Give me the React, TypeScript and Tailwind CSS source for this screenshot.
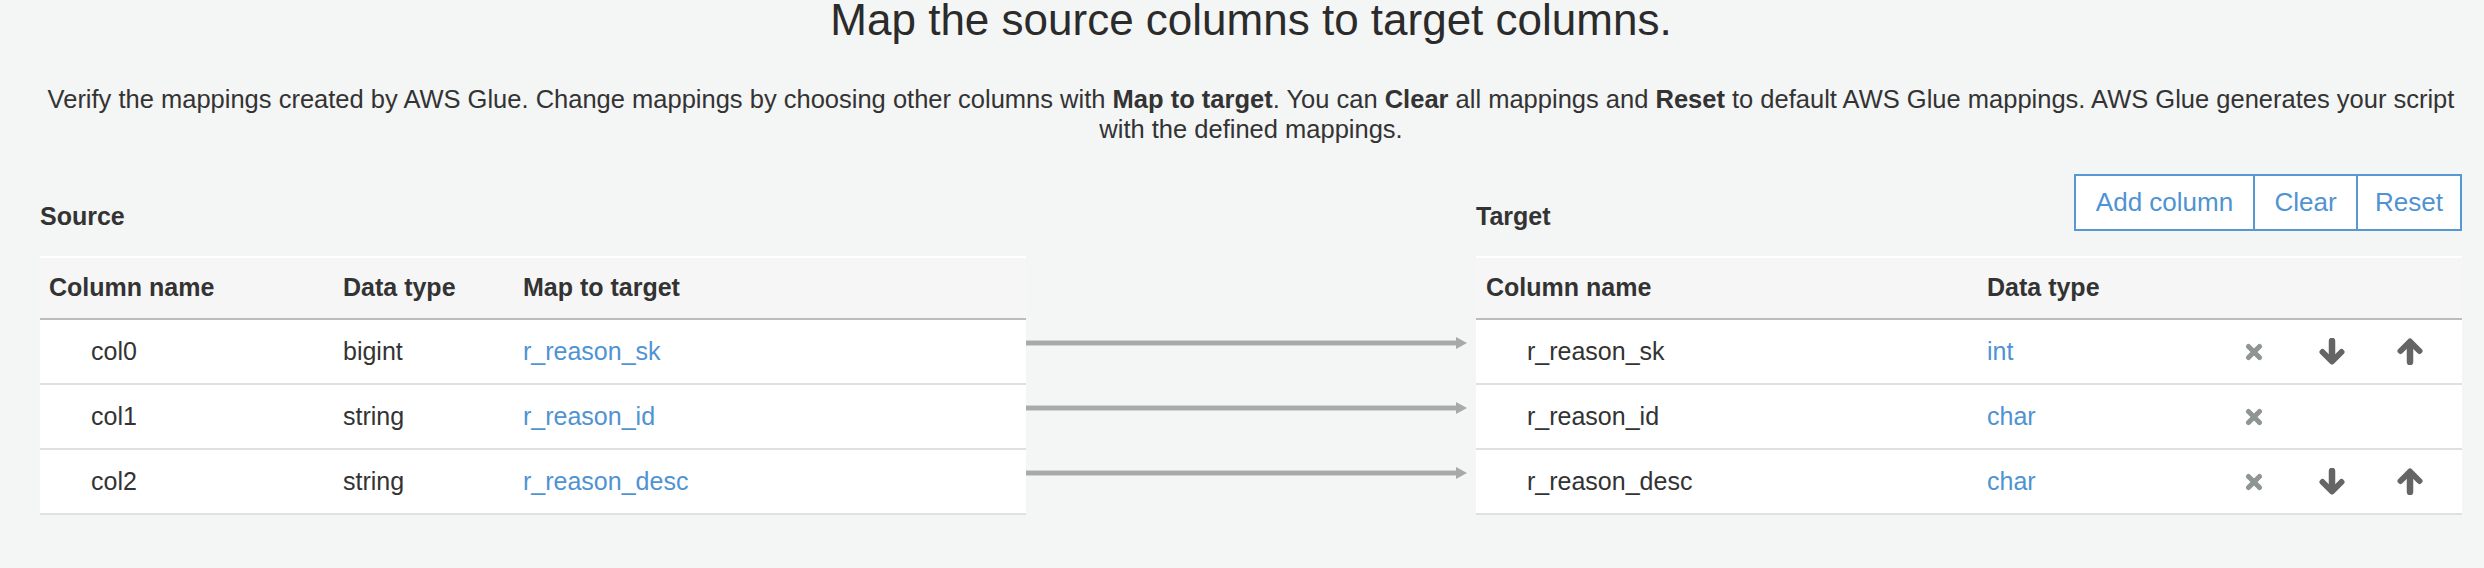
import React from "react";

const FONT = { fontFamily: '"Liberation Sans", Arial, Helvetica, sans-serif' };

function XIcon() {
  return (
    <svg width="18" height="18" viewBox="0 0 18 18">
      <path d="M3.5 3.5 L14.5 14.5 M14.5 3.5 L3.5 14.5" stroke="#8f9494" strokeWidth="5" strokeLinecap="round" fill="none" />
    </svg>
  );
}

function DownIcon() {
  return (
    <svg width="28" height="27" viewBox="0 0 28 27">
      <path d="M14 3 L14 22" stroke="#656565" strokeWidth="6.5" strokeLinecap="round" fill="none" />
      <path d="M4.5 14 L14 23.5 L23.5 14" stroke="#656565" strokeWidth="6" strokeLinecap="round" strokeLinejoin="round" fill="none" />
    </svg>
  );
}

function UpIcon() {
  return (
    <svg width="28" height="27" viewBox="0 0 28 27">
      <path d="M14 24 L14 5" stroke="#656565" strokeWidth="6.5" strokeLinecap="round" fill="none" />
      <path d="M4.5 13 L14 3.5 L23.5 13" stroke="#656565" strokeWidth="6" strokeLinecap="round" strokeLinejoin="round" fill="none" />
    </svg>
  );
}

function Arrow() {
  return (
    <svg width="441" height="14" viewBox="0 0 441 14" className="block">
      <rect x="0" y="5" width="432" height="4" fill="#a9a9a9" />
      <rect x="0" y="4" width="432" height="1" fill="#d2d2d2" />
      <rect x="0" y="9" width="432" height="1" fill="#d2d2d2" />
      <path d="M430 1 L441 7 L430 13 Z" fill="#a9a9a9" />
    </svg>
  );
}

const source = [
  { name: "col0", type: "bigint", map: "r_reason_sk" },
  { name: "col1", type: "string", map: "r_reason_id" },
  { name: "col2", type: "string", map: "r_reason_desc" },
];

const target = [
  { name: "r_reason_sk", type: "int", down: true, up: true },
  { name: "r_reason_id", type: "char", down: false, up: false },
  { name: "r_reason_desc", type: "char", down: true, up: true },
];

export default function App() {
  return (
    <div className="w-full min-h-[568px] bg-[#f4f5f5] text-[#333333]" style={FONT}>
      <div className="pl-[40px] pr-[22px]">
        <h1 className="text-center text-[44px] leading-[40px] font-normal text-[#2b2b2b]">
          Map the source columns to target columns.
        </h1>
        <p className="mt-[44px] text-center text-[25.5px] leading-[30px] text-[#333333]">
          Verify the mappings created by AWS Glue. Change mappings by choosing other columns with{" "}
          <b>Map to target</b>. You can <b>Clear</b> all mappings and <b>Reset</b> to default AWS Glue mappings. AWS Glue generates your script with the defined mappings.
        </p>

        <div className="mt-[30px] flex">
          {/* Source */}
          <div className="w-[986px] shrink-0">
            <div className="h-[82px] flex items-end pb-[25px]">
              <div className="text-[25px] leading-[30px] font-bold">Source</div>
            </div>
            <div className="border-t-2 border-white">
              <div className="h-[62px] flex items-center bg-[#f6f6f6] border-b-2 border-[#bcbcbc] text-[25px] font-bold">
                <div className="w-[294px] pl-[9px]">Column name</div>
                <div className="w-[180px] pl-[9px]">Data type</div>
                <div className="pl-[9px]">Map to target</div>
              </div>
              {source.map((r) => (
                <div key={r.name} className="h-[65px] flex items-center bg-white border-b-2 border-[#e0e0e0] text-[25px]">
                  <div className="w-[294px] pl-[51px]">{r.name}</div>
                  <div className="w-[180px] pl-[9px]">{r.type}</div>
                  <div className="pl-[9px] text-[#4f93d2]">{r.map}</div>
                </div>
              ))}
            </div>
          </div>

          {/* Arrows */}
          <div className="w-[450px] shrink-0">
            <div className="h-[148px]" />
            {source.map((r) => (
              <div key={r.name} className="h-[65px] pt-[14px]">
                <Arrow />
              </div>
            ))}
          </div>

          {/* Target */}
          <div className="w-[986px] shrink-0">
            <div className="h-[82px] flex justify-between">
              <div className="self-end pb-[25px] text-[25px] leading-[30px] font-bold">Target</div>
              <div className="self-start flex border-2 border-[#5598d3] bg-white text-[26px] text-[#4f93d2] h-[57px]">
                <div className="w-[177px] flex items-center justify-center">Add column</div>
                <div className="w-[103px] flex items-center justify-center border-l-2 border-[#5598d3]">Clear</div>
                <div className="w-[104px] flex items-center justify-center border-l-2 border-[#5598d3]">Reset</div>
              </div>
            </div>
            <div className="border-t-2 border-white">
              <div className="h-[62px] flex items-center bg-[#f6f6f6] border-b-2 border-[#bcbcbc] text-[25px] font-bold">
                <div className="w-[501px] pl-[10px]">Column name</div>
                <div className="pl-[10px]">Data type</div>
              </div>
              {target.map((r) => (
                <div key={r.name} className="h-[65px] flex items-center bg-white border-b-2 border-[#e0e0e0] text-[25px]">
                  <div className="w-[501px] pl-[51px]">{r.name}</div>
                  <div className="w-[258px] pl-[10px] text-[#4f93d2]">{r.type}</div>
                  <div className="ml-[10px] flex items-center">
                    <XIcon />
                  </div>
                  {r.down && (
                    <div className="ml-[55px] flex items-center">
                      <DownIcon />
                    </div>
                  )}
                  {r.up && (
                    <div className="ml-[50px] flex items-center">
                      <UpIcon />
                    </div>
                  )}
                </div>
              ))}
            </div>
          </div>
        </div>
      </div>
    </div>
  );
}
